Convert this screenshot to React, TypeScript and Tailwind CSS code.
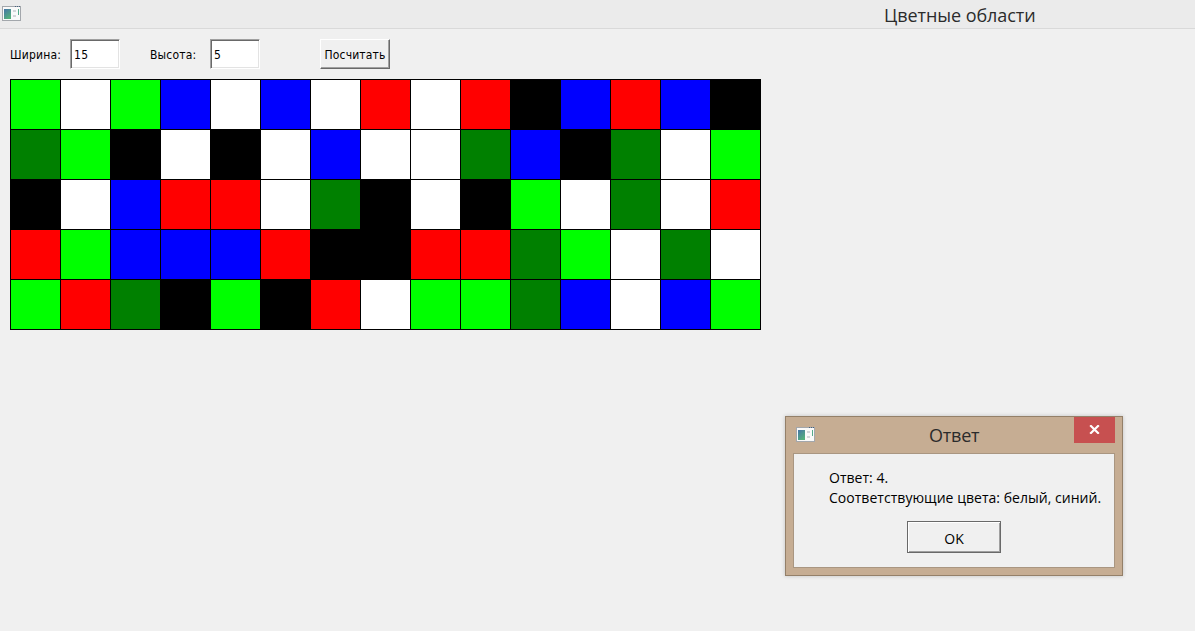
import React from "react";

const ROWS = [
  "GWGBWBWRWRKBRBK",
  "DGKWKWBWWDBKDWG",
  "KWBRRWDKWKGWDWR",
  "RGBBBRKKRRDGWDW",
  "GRDKGKRWGGDBWBG",
];

const COLORS: Record<string, string> = {
  G: "bg-[#00ff00]",
  W: "bg-white",
  B: "bg-[#0000ff]",
  R: "bg-[#ff0000]",
  K: "bg-black",
  D: "bg-[#008000]",
};

function WindowIcon() {
  return (
    <svg width="19" height="15" viewBox="0 0 19 15" className="block shrink-0" shapeRendering="crispEdges">
      <defs>
        <linearGradient id="pane" x1="0" y1="0" x2="0.6" y2="1">
          <stop offset="0" stopColor="#4574a8" />
          <stop offset="1" stopColor="#54b07c" />
        </linearGradient>
      </defs>
      <rect x="0" y="0" width="19" height="15" fill="#a3a7ac" />
      <rect x="1" y="1" width="17" height="13" fill="#fafafa" />
      <rect x="2" y="3" width="7" height="10" fill="url(#pane)" />
      <rect x="11" y="4" width="3" height="2" fill="#d3d6d9" />
      <rect x="11" y="9" width="3" height="2" fill="#d3d6d9" />
      <rect x="16" y="3" width="1" height="6" fill="#55ac8c" />
      <path d="M13 0h1v1h-1zM15 0h1v1h-1zM17 0h1v1h-1z" fill="#47627e" />
    </svg>
  );
}

function Field({ value }: { value: string }) {
  return (
    <input
      readOnly
      value={value}
      className="block h-[30px] w-[50px] border border-t-[#a0a0a0] border-l-[#a0a0a0] border-r-white border-b-white bg-white pt-[2px] pl-[3px] text-[12px] tracking-[0.4px] shadow-[inset_1px_1px_0_#696969,inset_-1px_-1px_0_#e3e3e3] outline-none"
    />
  );
}

export default function App() {
  return (
    <div className="relative h-[631px] w-[1195px] overflow-hidden bg-[#f0f0f0] font-['Open_Sans','Noto_Sans',sans-serif] text-black">
      <header className="flex h-[29px] border-b border-[#d9d9d9] bg-[#ebebeb] pt-[6px] pl-[2px]">
        <WindowIcon />
        <h1 className="-mt-[5px] ml-[863px] text-[18px] leading-[28px] tracking-[-0.07px] whitespace-nowrap text-[#2b2b2b]">
          Цветные области
        </h1>
      </header>

      <main className="pt-[10px] pl-[10px]">
        <form className="flex h-[30px] items-center font-['DejaVu_Sans_Condensed','DejaVu_Sans',sans-serif] text-[12px] tracking-[0.2px]">
          <label className="w-[60px] pt-[2px] whitespace-nowrap">Ширина:</label>
          <Field value="15" />
          <label className="ml-[30px] w-[60px] pt-[2px] whitespace-nowrap">Высота:</label>
          <Field value="5" />
          <button
            type="button"
            className="ml-[60px] h-[30px] w-[70px] border border-t-white border-l-white border-r-[#696969] border-b-[#696969] pt-[2px] whitespace-nowrap tracking-[0.15px] shadow-[inset_-1px_-1px_0_#a0a0a0]"
          >
            Посчитать
          </button>
        </form>

        <div className="mt-[10px] grid w-[751px] grid-cols-15 gap-px border border-black bg-black">
          {ROWS.join("").split("").map((c, i) => (
            <div key={i} className={`h-[49px] ${COLORS[c]}`} />
          ))}
        </div>
      </main>

      <section
        role="dialog"
        className="absolute top-[416px] left-[785px] flex h-[160px] w-[338px] flex-col border border-[#948069] bg-[#c6ad93] px-[7px] pb-[7px] shadow-[0_0_4px_rgba(0,0,0,0.2)]"
      >
        <div className="flex h-[36px] shrink-0">
          <div className="pt-[10px] pl-[3px]">
            <WindowIcon />
          </div>
          <h2 className="ml-[114px] flex-1 pt-[4px] text-[18px] leading-[28px] tracking-[-0.2px] text-[#2b2b2b]">Ответ</h2>
          <button type="button" className="flex h-[26px] w-[41px] items-center justify-center bg-[#c75050] pb-[1px]">
            <svg width="11" height="9" viewBox="0 0 11 9">
              <path d="M1.2 0.3L9.8 8.7M9.8 0.3L1.2 8.7" stroke="white" strokeWidth="2.2" />
            </svg>
          </button>
        </div>
        <div className="flex flex-1 flex-col border border-[#a99681] bg-[#f0f0f0] pt-[14px]">
          <p className="pl-[35px] text-[14px] leading-[20px] tracking-[0.03px] whitespace-nowrap">
            Ответ: 4.
            <br />
            Соответствующие цвета: белый, синий.
          </p>
          <button
            type="button"
            className="mt-[13px] ml-[113px] h-[32px] w-[94px] border border-[#696969] pt-[2px] text-[14px] shadow-[inset_1px_1px_0_white,inset_-1px_-1px_0_#a0a0a0]"
          >
            OK
          </button>
        </div>
      </section>
    </div>
  );
}
